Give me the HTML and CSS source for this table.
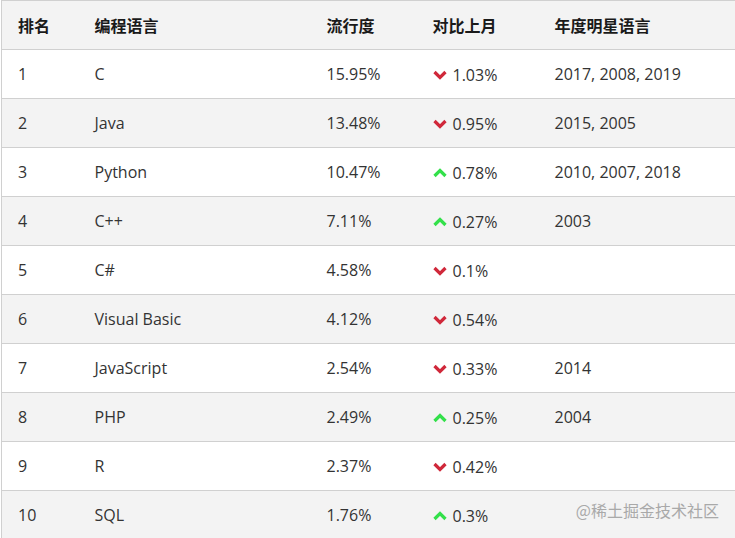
FILE: index.html
```html
<!DOCTYPE html>
<html lang="zh">
<head>
<meta charset="utf-8">
<link rel="stylesheet" href="styles.css">
</head>
<body>
<div class="wrap">
<table class="rank">
  <colgroup>
    <col class="c1"><col class="c2"><col class="c3"><col class="c4"><col class="c5">
  </colgroup>
  <thead>
    <tr><th>排名</th><th>编程语言</th><th>流行度</th><th>对比上月</th><th>年度明星语言</th></tr>
  </thead>
  <tbody>
    <tr><td>1</td><td>C</td><td>15.95%</td><td><span class="chg"><svg class="dn" viewBox="0 0 14 10"><path d="M1.5 2 L7 7.5 L12.5 2"/></svg>1.03%</span></td><td>2017, 2008, 2019</td></tr>
    <tr><td>2</td><td>Java</td><td>13.48%</td><td><span class="chg"><svg class="dn" viewBox="0 0 14 10"><path d="M1.5 2 L7 7.5 L12.5 2"/></svg>0.95%</span></td><td>2015, 2005</td></tr>
    <tr><td>3</td><td>Python</td><td>10.47%</td><td><span class="chg"><svg class="up" viewBox="0 0 14 10"><path d="M1.5 8 L7 2.5 L12.5 8"/></svg>0.78%</span></td><td>2010, 2007, 2018</td></tr>
    <tr><td>4</td><td>C++</td><td>7.11%</td><td><span class="chg"><svg class="up" viewBox="0 0 14 10"><path d="M1.5 8 L7 2.5 L12.5 8"/></svg>0.27%</span></td><td>2003</td></tr>
    <tr><td>5</td><td>C#</td><td>4.58%</td><td><span class="chg"><svg class="dn" viewBox="0 0 14 10"><path d="M1.5 2 L7 7.5 L12.5 2"/></svg>0.1%</span></td><td></td></tr>
    <tr><td>6</td><td>Visual Basic</td><td>4.12%</td><td><span class="chg"><svg class="dn" viewBox="0 0 14 10"><path d="M1.5 2 L7 7.5 L12.5 2"/></svg>0.54%</span></td><td></td></tr>
    <tr><td>7</td><td>JavaScript</td><td>2.54%</td><td><span class="chg"><svg class="dn" viewBox="0 0 14 10"><path d="M1.5 2 L7 7.5 L12.5 2"/></svg>0.33%</span></td><td>2014</td></tr>
    <tr><td>8</td><td>PHP</td><td>2.49%</td><td><span class="chg"><svg class="up" viewBox="0 0 14 10"><path d="M1.5 8 L7 2.5 L12.5 8"/></svg>0.25%</span></td><td>2004</td></tr>
    <tr><td>9</td><td>R</td><td>2.37%</td><td><span class="chg"><svg class="dn" viewBox="0 0 14 10"><path d="M1.5 2 L7 7.5 L12.5 2"/></svg>0.42%</span></td><td></td></tr>
    <tr><td>10</td><td>SQL</td><td>1.76%</td><td><span class="chg"><svg class="up" viewBox="0 0 14 10"><path d="M1.5 8 L7 2.5 L12.5 8"/></svg>0.3%</span></td><td></td></tr>
  </tbody>
</table>
<div class="mark">@稀土掘金技术社区</div>
</div>
</body>
</html>
```

FILE: styles.css
```css
html, body {
  margin: 0;
  padding: 0;
  background: #fff;
  overflow: hidden;
}
.wrap {
  position: relative;
  width: 735px;
  height: 538px;
  overflow: hidden;
}
.rank {
  border-collapse: collapse;
  width: 760px;
  margin-left: 1px;
  table-layout: fixed;
  font-family: "Open Sans", "Noto Sans CJK SC", sans-serif;
  font-size: 16px;
  color: #333;
  border-left: 1px solid #d0d0d0;
  border-top: 1px solid #d0d0d0;
}
.c1 { width: 77px; }
.c2 { width: 232px; }
.c3 { width: 106px; }
.c4 { width: 122px; }
.c5 { width: 223px; }
.rank th, .rank td {
  height: 49px;
  padding: 0 0 0 16px;
  text-align: left;
  vertical-align: middle;
  border-bottom: 1px solid #d0d0d0;
  box-sizing: border-box;
  white-space: nowrap;
}
.rank th {
  font-family: "Noto Sans CJK SC", sans-serif;
  font-weight: 700;
  color: #1a1a1a;
  background: #f3f3f3;
}
.rank tbody tr:nth-child(even) td {
  background: #f3f3f3;
}
.chg {
  display: inline-flex;
  align-items: center;
  gap: 6px;
}
.chg svg {
  width: 14px;
  height: 10px;
  fill: none;
  stroke-width: 3.2;
  stroke-linecap: butt;
  stroke-linejoin: miter;
}
.chg svg.dn { stroke: #d0283a; }
.chg svg.up { stroke: #33e04a; }
.mark {
  position: absolute;
  right: 16px;
  bottom: 16px;
  font-family: "Noto Sans CJK SC", sans-serif;
  font-size: 16px;
  color: #a9a9a9;
}
```
